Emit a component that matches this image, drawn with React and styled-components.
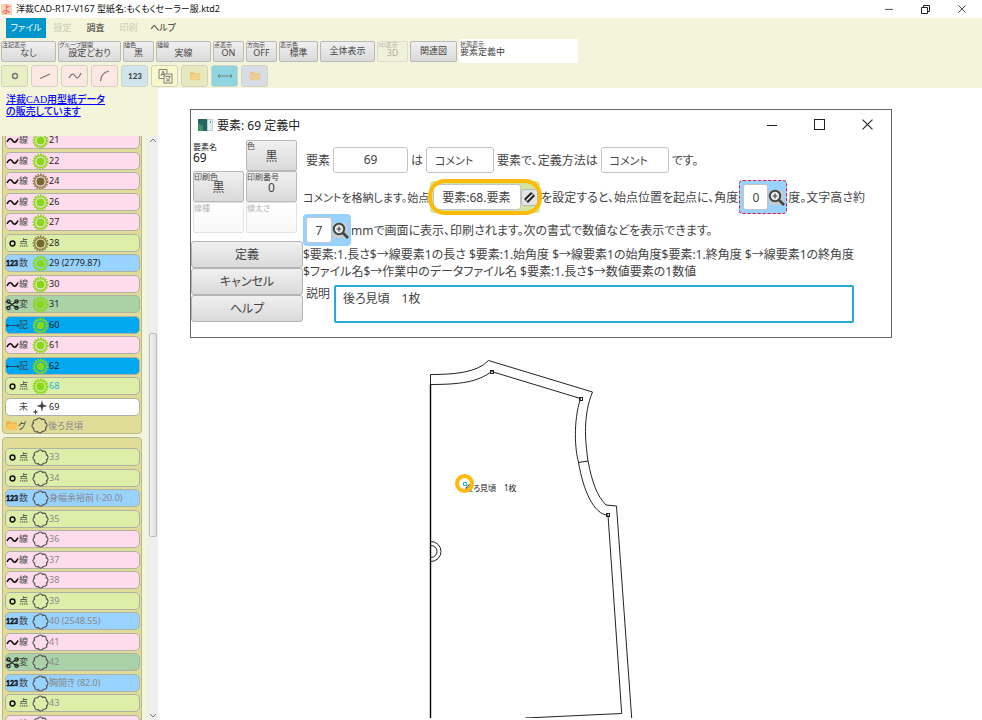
import React from 'react';
import styled, { createGlobalStyle } from 'styled-components';

const GlobalStyle = createGlobalStyle`
  * {
    box-sizing: border-box;
  }
  body {
    margin: 0;
    overflow: hidden;
    background: #fff;
    color: #222;
    font-family: "Noto Sans", "Noto Sans CJK JP", sans-serif;
    font-feature-settings: "palt";
  }
  button, input, textarea {
    font: inherit;
    font-feature-settings: inherit;
    color: inherit;
    margin: 0;
  }
  svg {
    display: block;
    flex: none;
  }
`;

const Page = styled.div`
  height: 100vh;
  display: flex;
  flex-direction: column;
`;

const TitleBar = styled.header`
  height: 18px;
  flex: none;
  display: flex;
  align-items: center;
  gap: 4px;
  padding-left: 1px;
  font-size: 9px;
  line-height: 18px;
  color: #111;
`;

const Logo = styled.span`
  width: 11px;
  height: 11px;
  line-height: 10px;
  font-size: 10px;
  text-align: center;
  background: #f6d3b3;
  color: #f0506a;
`;

const WindowButtons = styled.div`
  display: flex;
  margin-left: auto;
  padding-right: ${(p) => p.$end}px;
  gap: ${(p) => p.$gap}px;
`;

const WindowButton = styled.button`
  border: 0;
  padding: 0;
  background: none;
`;

const Chrome = styled.div`
  flex: none;
  background: #f3f4d9;
`;

const MenuBar = styled.nav`
  display: flex;
  height: 20px;
  padding-left: 6px;
`;

const MenuItem = styled.button`
  width: ${(p) => p.$width || 33}px;
  border: 0;
  padding: 0;
  font-size: 9px;
  line-height: 20px;
  text-align: center;
  background: ${(p) => (p.$active ? '#0096c9' : 'none')};
  color: ${(p) => (p.$active ? '#fff' : '#333')};
  &:disabled {
    color: #ccccb8;
  }
`;

const ToolBar = styled.div`
  display: flex;
  align-items: center;
  gap: 2px;
  height: 26px;
  padding-left: 1px;
`;

const Option = styled.button`
  display: flex;
  flex-direction: column;
  justify-content: ${(p) => (p.$plain ? 'center' : 'flex-start')};
  width: ${(p) => p.$width}px;
  height: ${(p) => p.$height || 21}px;
  padding: 0;
  border: 1px solid #b9b9b9;
  border-radius: 2px;
  background: linear-gradient(#f0f0f0, #dadada);
  color: #444;
  &:disabled {
    opacity: 0.4;
    background: ${(p) => (p.$height ? 'linear-gradient(#fff, #eee)' : '#eeeedd')};
  }
`;

const OptionName = styled.span`
  align-self: flex-start;
  font-size: ${(p) => p.$size || 6}px;
  line-height: ${(p) => (p.$size ? 9 : 6)}px;
  white-space: nowrap;
`;

const OptionValue = styled.span`
  align-self: center;
  font-size: ${(p) => p.$size || 9}px;
  line-height: ${(p) => (p.$size ? 13 : 10)}px;
  white-space: nowrap;
`;

const Status = styled.div`
  width: 119px;
  height: 24px;
  padding: 2px 0 0 1px;
  display: flex;
  flex-direction: column;
  background: #fff;
  color: #444;
  ${OptionValue} {
    align-self: flex-start;
  }
`;

const IconBar = styled(ToolBar)`
  height: 24px;
  gap: 3px;
`;

const IconButton = styled.button`
  display: flex;
  align-items: center;
  justify-content: center;
  width: 27px;
  height: 22px;
  padding: 0;
  border: 1px solid #d2d2c2;
  border-radius: 3px;
  background: ${(p) => p.$color};
  svg {
    opacity: ${(p) => (p.$pale ? 0.6 : 1)};
  }
`;

const Body = styled.div`
  flex: 1;
  min-height: 0;
  display: flex;
`;

const Sidebar = styled.aside`
  width: 158px;
  flex: none;
  display: flex;
  flex-direction: column;
  background: #f3f4d9;
`;

const Shop = styled.a`
  height: 48px;
  flex: none;
  padding: 6px 6px 0;
  color: #00f;
  font-family: "Liberation Serif", "Noto Sans CJK JP", serif;
  font-size: 10px;
  font-weight: 500;
  line-height: 12px;
`;

const ListArea = styled.div`
  flex: 1;
  min-height: 0;
  display: flex;
  justify-content: space-between;
  overflow: hidden;
`;

const Groups = styled.div`
  flex: none;
  width: 140px;
  margin: -9px 0 0 2px;
`;

const Group = styled.section`
  margin-bottom: 3px;
  padding: ${(p) => p.$top}px 1px 0 2px;
  border: 1px solid #b9b98c;
  border-radius: 4px;
  background: #dfdc98;
`;

const Items = styled.ul`
  list-style: none;
  margin: 0;
  padding: 0;
  display: grid;
  grid-auto-rows: 21px 20px;
  align-items: start;
`;

const Item = styled.li`
  display: flex;
  align-items: center;
  height: 18px;
  border: 1px solid #b0b0a8;
  border-radius: 5px;
  background: ${(p) => p.$color};
  font-size: 9px;
  line-height: 16px;
  color: ${(p) => p.$text};
  white-space: nowrap;
`;

const GroupName = styled.div`
  display: flex;
  align-items: center;
  height: 15px;
  font-size: 9px;
  line-height: 15px;
  color: #888;
`;

const Kind = styled.span`
  width: 13px;
  color: #444;
`;

const ScrollBar = styled.div`
  width: 11px;
  display: flex;
  flex-direction: column;
  align-items: center;
  justify-content: space-between;
  background: #eeeeea;
`;

const Thumb = styled.div`
  width: 8px;
  height: 204px;
  margin-top: 189px;
  margin-bottom: auto;
  border: 1px solid #bcbcbc;
  border-radius: 2px;
  background: linear-gradient(90deg, #f4f4f4, #dcdcdc);
`;

const Canvas = styled.main`
  flex: 1;
  min-width: 0;
  overflow: hidden;
  padding: 21px 90px 0 32px;
`;

const Dialog = styled.section`
  height: 229px;
  border: 1px solid #666;
  background: #fff;
`;

const DialogTitle = styled.div`
  display: flex;
  align-items: center;
  gap: 4px;
  height: 29px;
  padding-left: 7px;
  font-size: 12px;
  color: #222;
`;

const DialogBody = styled.div`
  display: flex;
`;

const Left = styled.div`
  width: 112px;
  flex: none;
  display: flex;
  flex-direction: column;
  gap: 8px;
`;

const Attributes = styled.div`
  display: grid;
  grid-template-columns: 51px 51px;
  gap: 0 2px;
  padding: 1px 0 0 2px;
`;

const ElementName = styled.div`
  display: flex;
  flex-direction: column;
  padding-top: 2px;
  ${OptionValue} {
    align-self: flex-start;
  }
`;

const Command = styled.button`
  display: block;
  width: 100%;
  height: 27px;
  padding: 0;
  border: 1px solid #b4b4b4;
  border-radius: 3px;
  background: linear-gradient(#f0f0f0, #dadada);
  font-size: 12px;
  line-height: 25px;
  color: #444;
`;

const Right = styled.div`
  flex: 1;
  min-width: 0;
  font-size: 12px;
  color: #444;
`;

const Sentence = styled.div`
  display: flex;
  align-items: center;
  gap: ${(p) => p.$gap || 0}px;
  height: ${(p) => p.$height}px;
  padding-left: ${(p) => p.$indent || 0}px;
  white-space: nowrap;
`;

const Compact = styled.span`
  font-size: 11px;
`;

const Field = styled.input`
  width: ${(p) => p.$width}px;
  height: 26px;
  padding: 0 ${(p) => (p.$center ? 0 : 8)}px;
  border: 1px solid #c4c4c4;
  border-radius: 3px;
  font-size: ${(p) => (p.$compact ? 11 : 12)}px;
  text-align: ${(p) => (p.$center ? 'center' : 'left')};
  background: #fff;
  outline: none;
`;

const Chip = styled.span`
  position: relative;
  display: flex;
  align-items: center;
  height: ${(p) => (p.$picked ? 34 : 32)}px;
  padding: 0 ${(p) => (p.$picked ? 1 : 2)}px 0 3px;
  border: ${(p) => (p.$picked ? '1px dashed #f01030' : '0')};
  border-radius: 4px;
  background: ${(p) => p.$color};
`;

const Ring = styled.span`
  position: absolute;
  inset: -2px;
  border: 4px solid #ffba08;
  border-radius: 17px;
  pointer-events: none;
`;

const PickButton = styled.button`
  display: flex;
  align-items: center;
  justify-content: center;
  width: 17px;
  height: 17px;
  padding: 0;
  border: 1px solid #bbb;
  border-radius: 3px;
  background: #e4e4e4;
`;

const Formats = styled.p`
  margin: 0;
  line-height: 17px;
  white-space: nowrap;
`;

const Description = styled.div`
  display: flex;
  gap: 4px;
  padding: 5px 37px 0 3px;
  line-height: 17px;
`;

const Memo = styled.textarea`
  flex: 1;
  height: 38px;
  padding: 3px 7px;
  border: 2px solid #25a9d8;
  border-radius: 2px;
  resize: none;
  outline: none;
  line-height: 17px;
`;

const Drawing = styled.svg`
  margin: 18px 0 0 238px;
`;

const MinimizeIcon = ({ size }) => (
  <svg width={size} height={size} viewBox="0 0 10 10" stroke="#222">
    <path d="M0 5.5h10" />
  </svg>
);

const CloseIcon = ({ size }) => (
  <svg width={size} height={size} viewBox="0 0 10 10" stroke="#222">
    <path d="M0.5 0.5l9 9M9.5 0.5l-9 9" />
  </svg>
);

const Folder = ({ size = 13 }) => (
  <svg width={size} height={size} viewBox="0 0 13 13">
    <path d="M1 2h4l1 1.5h6v7H1z" fill="#efb64a" />
    <path d="M1 11l2-6h9.5l-1 6z" fill="#fbc55f" />
  </svg>
);

const GLYPHS = {
  線: <path d="M1 8C3 4 5 4 6.5 6.5S10 9 12 4.5" fill="none" stroke="#111" strokeWidth="1.6" />,
  点: <circle cx="6.5" cy="6.5" r="2.4" fill="none" stroke="#111" strokeWidth="1.5" />,
  数: <text x="0" y="9" fontSize="7" fontWeight="900" fontFamily="Lato, sans-serif" fill="#111" stroke="#111" strokeWidth="0.4">123</text>,
  変: (
    <g fill="none" stroke="#222" strokeWidth="1.2">
      <path d="M0 4C4 3 8 10 13 10M0 9.500C4 10 8 3 13 3" />
      <circle cx="2.500" cy="3.500" r="1.600" />
      <circle cx="2.500" cy="10" r="1.600" />
      <circle cx="10.500" cy="3.500" r="1.600" />
      <circle cx="10.500" cy="9.700" r="1.600" />
    </g>
  ),
  記: <path d="M0 6.5h13M2 5L0 6.5L2 8M11 5l2 1.5L11 8" fill="none" stroke="#234" strokeWidth="0.8" />,
};

const KindIcon = ({ kind }) => (
  <svg width="13" height="13" viewBox="0 0 13 13">{GLYPHS[kind]}</svg>
);

// filled sun = visible, brown sun = reference only, outline = hidden
const StateIcon = ({ state }) => {
  if (state === 'new') {
    return (
      <svg width="17" height="16" viewBox="0 0 17 16" fill="#444">
        <path d="M10 1l1 4.5L15.5 7L11 8.2L10 13L8.8 8.2L4.5 7L8.8 5.5z" />
        <path d="M3.5 10l.8 2.2l2.2.8l-2.2.8l-.8 2.2l-.8-2.2L.5 13l2.2-.8z" />
      </svg>
    );
  }
  if (state === 'off') {
    const arcs = [0, 45, 90, 135, 180, 225, 270, 315];
    return (
      <svg width="17" height="17" viewBox="0 0 17 17" fill="none" stroke="#555" strokeWidth="1.1">
        {arcs.map((a) => (
          <path key={a} d="M5.600 3.200Q6.200 0.600 8.600 1L11 2.200" transform={`rotate(${a} 8.5 8.5)`} />
        ))}
      </svg>
    );
  }
  const color = state === 'ref' ? '#8c7c45' : '#86d914';
  return (
    <svg width="17" height="17" viewBox="0 0 17 17">
      <circle cx="8.5" cy="8.5" r="7.2" fill="none" stroke={color} strokeWidth="1.6" strokeDasharray="1.6 1.17" />
      <circle cx="8.5" cy="8.5" r="5.9" fill="none" stroke={color} strokeWidth="1.3" />
      <circle cx="8.5" cy="8.5" r="4" fill={state === 'ref' ? '#73692f' : color} />
    </svg>
  );
};

const Magnifier = () => (
  <svg width="17" height="19" viewBox="0 0 17 19">
    <rect x="1" y="2" width="14" height="15" rx="2" fill="#ccc" />
    <circle cx="7" cy="8" r="5.2" fill="#eee" stroke="#444" strokeWidth="2" />
    <path d="M11 12l5 5" stroke="#444" strokeWidth="2.6" />
    <path d="M4.5 8h5M7 5.5v5" stroke="#444" strokeWidth="1.2" />
  </svg>
);

const COLORS = {
  線: '#ffdcec',
  点: '#dceea8',
  数: '#98d2ff',
  変: '#a9d2a8',
  記: '#00a8f0',
  未: '#ffffff',
};

const front = [
  ['線', '21'],
  ['線', '22'],
  ['線', '24', 'ref'],
  ['線', '26'],
  ['線', '27'],
  ['点', '28', 'ref'],
  ['数', '29 (2779.87)'],
  ['線', '30'],
  ['変', '31'],
  ['記', '60'],
  ['線', '61'],
  ['記', '62'],
  ['点', '68', 'on', '#1cb4dc'],
  ['未', '69', 'new'],
];

const back = [
  ['点', '33'],
  ['点', '34'],
  ['数', '身幅余裕前 (-20.0)'],
  ['点', '35'],
  ['線', '36'],
  ['線', '37'],
  ['線', '38'],
  ['点', '39'],
  ['数', '40 (2548.55)'],
  ['線', '41'],
  ['変', '42'],
  ['数', '胸開き (82.0)'],
  ['点', '43'],
  ['線', '44'],
].map(([kind, name]) => [kind, name, 'off']);

const ElementGroup = ({ items, top, name: groupName }) => (
  <Group $top={top}>
    <Items>
      {items.map(([kind, name, state = 'on', text]) => (
        <Item key={name} $color={COLORS[kind]} $text={text || (state === 'off' ? '#888' : '#222')}>
          <KindIcon kind={kind} />
          <Kind>{kind}</Kind>
          <StateIcon state={state} />
          {name}
        </Item>
      ))}
    </Items>
    {groupName && (
      <GroupName>
        <Folder />
        <Kind>グ</Kind>
        <StateIcon state="off" />
        {groupName}
      </GroupName>
    )}
  </Group>
);

const options = [
  { name: '注記表示', value: 'なし', width: 55 },
  { name: 'グループ展開', value: '設定どおり', width: 63 },
  { name: '描色', value: '黒', width: 31 },
  { name: '描線', value: '実線', width: 55 },
  { name: '点表示', value: 'ON', width: 31 },
  { name: '方向示', value: 'OFF', width: 31 },
  { name: '表示色', value: '標準', width: 39 },
  { value: '全体表示', width: 55 },
  { name: '3D表示', value: '3D', width: 31, disabled: true },
  { value: '関連図', width: 47 },
];

const tools = [
  { name: '点', color: '#e8efc4', icon: <circle cx="9" cy="8" r="2.5" strokeWidth="1.4" /> },
  { name: '直線', color: '#fbe8e2', icon: <path d="M4 10.5L14 6" strokeWidth="1.2" /> },
  { name: '曲線', color: '#fbe8e2', icon: <path d="M3 10C6 4 8 6 9.5 8.5S13 10 15 5" strokeWidth="1.2" /> },
  { name: '円弧', color: '#fbe8e2', icon: <path d="M4.5 13C5 8 8 4 13 3" strokeWidth="1.2" /> },
  {
    name: '数値',
    color: '#cfe5ec',
    icon: (
      <text x="2" y="11" fontSize="8" fontWeight="900" fontFamily="Lato, sans-serif" fill="#444" stroke="none">
        123
      </text>
    ),
  },
  {
    name: '変換',
    color: '#f8f8cc',
    icon: (
      <g strokeWidth="0.9">
        <path d="M8 10.500H3V1.500h8v4" />
        <path d="M5 8l2-5l2 5M5.800 6.500h2.400" />
        <rect x="8" y="6" width="8" height="9" />
        <path d="M9.500 8.500h5M12 7.500v1M10 13.500Q13.500 12 14 8.500M10 9.500Q11 12 14 13.500" />
      </g>
    ),
  },
  { name: 'グループ', color: '#e8e8bf', folder: true },
  { name: '寸法', color: '#8dd5e0', icon: <path d="M2 8h14M4 6L2 8l2 2M14 6l2 2l-2 2" strokeWidth="0.9" /> },
  { name: 'フォルダ', color: '#d7dce6', folder: true },
];

const Settings = () => (
  <Attributes>
    <ElementName>
      <OptionName $size={8}>要素名</OptionName>
      <OptionValue $size={12}>69</OptionValue>
    </ElementName>
    {[
      ['色', '黒'],
      ['印刷色', '黒'],
      ['印刷番号', '0'],
      ['線種', ''],
      ['線太さ', ''],
    ].map(([name, value]) => (
      <Option key={name} $width={51} $height={31} disabled={!value}>
        <OptionName $size={8}>{name}</OptionName>
        <OptionValue $size={12}>{value}</OptionValue>
      </Option>
    ))}
  </Attributes>
);

const ElementDialog = () => (
  <Dialog role="dialog" aria-label="要素: 69 定義中">
    <DialogTitle>
      <svg width="15" height="12" viewBox="0 0 15 12">
        <rect width="15" height="12" fill="#bcd" />
        <rect width="9" height="12" fill="#24665e" />
        <path d="M0 12V4l5 3v5z" fill="#3e8f6c" />
        <rect x="10" y="1" width="4" height="10" fill="#e8eef2" />
        <path d="M12.500 2v2" stroke="#2a8" />
      </svg>
      要素: 69 定義中
      <WindowButtons $end={18} $gap={37}>
        <WindowButton aria-label="最小化"><MinimizeIcon size={10} /></WindowButton>
        <WindowButton aria-label="最大化">
          <svg width="11" height="11" viewBox="0 0 11 11" fill="none" stroke="#222">
            <rect x="0.500" y="0.500" width="10" height="10" />
          </svg>
        </WindowButton>
        <WindowButton aria-label="閉じる"><CloseIcon size={11} /></WindowButton>
      </WindowButtons>
    </DialogTitle>
    <DialogBody>
      <Left>
        <Settings />
        <div>
          <Command>定義</Command>
          <Command>キャンセル</Command>
          <Command>ヘルプ</Command>
        </div>
      </Left>
      <Right>
        <Sentence $height={41} $gap={3} $indent={3}>
          <label htmlFor="element">要素</label>
          <Field id="element" $width={75} $center defaultValue="69" />
          <label htmlFor="type">は</label>
          <Field id="type" $width={68} $compact defaultValue="コメント" />
          <label htmlFor="method">要素で、定義方法は</label>
          <Field id="method" $width={68} $compact defaultValue="コメント" />
          です。
        </Sentence>
        <Sentence $height={34} $gap={1}>
          <Compact>コメントを格納します。始点</Compact>
          <Chip $color="#d3e79c">
            <Field $width={88} defaultValue="要素:68.要素" aria-label="始点" />
            <PickButton aria-label="始点を消去">
              <svg width="13" height="13" viewBox="0 0 13 13">
                <path d="M1 8L8 1L12 5L5 12z" fill="#222" />
                <path d="M3.500 9.500L9.500 3.500" stroke="#fff" strokeWidth="1.500" />
              </svg>
            </PickButton>
            <Ring />
          </Chip>
          を設定すると、始点位置を起点に、角度
          <Chip $color="#98d2ff" $picked>
            <Field $width={25} $center defaultValue="0" aria-label="角度" />
            <WindowButton aria-label="角度を選択"><Magnifier /></WindowButton>
          </Chip>
          度。文字高さ約
        </Sentence>
        <Sentence $height={32}>
          <Chip $color="#98d2ff">
            <Field $width={26} $center defaultValue="7" aria-label="文字高さ" />
            <WindowButton aria-label="文字高さを選択"><Magnifier /></WindowButton>
          </Chip>
          mmで画面に表示、印刷されます。次の書式で数値などを表示できます。
        </Sentence>
        <Formats>
          $要素:1.長さ$→線要素1の長さ $要素:1.始角度 $→線要素1の始角度$要素:1.終角度 $→線要素1の終角度
          <br />
          $ファイル名$→作業中のデータファイル名 $要素:1.長さ$→数値要素の1数値
        </Formats>
        <Description>
          <label htmlFor="memo">説明</label>
          <Memo id="memo" defaultValue="後ろ見頃　1枚" autoFocus onFocus={(e) => e.target.setSelectionRange(99, 99)} />
        </Description>
      </Right>
    </DialogBody>
  </Dialog>
);

const Pattern = () => (
  <Drawing width="210" height="362" viewBox="428 356 210 362" fill="none" stroke="#222">
    <path d="M430.500 384V374.500C453 374.500 477 373 488.500 360.500L592.500 392C583 415 585 440 588 461C592 482 597 496 606 505L616.500 506L631.700 718" />
    <path d="M430.500 384.500C460 384.500 478 382 491.500 371.500L580.500 398.500C573 422 575 450 578.500 462C583 490 594 515 608 515L621.700 713.500L525 718" />
    <path d="M578.500 462.500L588 461" />
    <path d="M430.500 384V718" stroke="#000" strokeWidth="1.400" />
    <path d="M431 545.500a6 6 0 0 1 0 12M431 541.500a10 10 0 0 1 0 20" />
    <path d="M490 370h3v3h-3zM579 397h3v3h-3zM606.500 513.500h3v3h-3z" shapeRendering="crispEdges" />
    <text x="465" y="491" fontSize="8" fill="#222" stroke="none" xmlSpace="preserve">後ろ見頃　1枚</text>
    <circle cx="464.500" cy="483.500" r="7.500" stroke="#ffba08" strokeWidth="4" />
    <path d="M463.500 482.500h3v3h-3z" stroke="#1cb4dc" />
  </Drawing>
);

const App = () => {
  return (
    <Page>
      <GlobalStyle />
      <TitleBar>
        <Logo>よ</Logo>
        洋裁CAD-R17-V167 型紙名:もくもくセーラー服.ktd2
        <WindowButtons $end={16} $gap={28}>
          <WindowButton aria-label="最小化"><MinimizeIcon size={8} /></WindowButton>
          <WindowButton aria-label="元に戻す">
            <svg width="9" height="9" viewBox="0 0 9 9" fill="none" stroke="#222">
              <path d="M0.500 2.500h6v6h-6zM2.500 2.500v-2h6v6h-2" />
            </svg>
          </WindowButton>
          <WindowButton aria-label="閉じる"><CloseIcon size={8} /></WindowButton>
        </WindowButtons>
      </TitleBar>
      <Chrome>
        <MenuBar>
          <MenuItem $active $width={40}>ファイル</MenuItem>
          <MenuItem disabled>設定</MenuItem>
          <MenuItem>調査</MenuItem>
          <MenuItem disabled>印刷</MenuItem>
          <MenuItem $width={36}>ヘルプ</MenuItem>
        </MenuBar>
        <ToolBar>
          {options.map((o) => (
            <Option key={o.value} $width={o.width} $plain={!o.name} disabled={o.disabled}>
              {o.name && <OptionName>{o.name}</OptionName>}
              <OptionValue>{o.value}</OptionValue>
            </Option>
          ))}
          <Status>
            <OptionName>状態表示</OptionName>
            <OptionValue>要素定義中</OptionValue>
          </Status>
        </ToolBar>
        <IconBar>
          {tools.map((t) => (
            <IconButton key={t.name} $color={t.color} $pale={t.folder} aria-label={t.name}>
              {t.folder ? (
                <Folder size={12} />
              ) : (
                <svg width="18" height="16" viewBox="0 0 18 16" fill="none" stroke="#777">
                  {t.icon}
                </svg>
              )}
            </IconButton>
          ))}
        </IconBar>
      </Chrome>
      <Body>
        <Sidebar>
          <Shop href="#">
            洋裁CAD用型紙データ
            <br />
            の販売しています
          </Shop>
          <ListArea>
            <Groups>
              <ElementGroup items={front} top={3} name="後ろ見頃" />
              <ElementGroup items={back} top={10} />
            </Groups>
            <ScrollBar>
              <svg width="8" height="8" viewBox="0 0 8 8" fill="none" stroke="#777">
                <path d="M1 6l3-3l3 3" />
              </svg>
              <Thumb />
              <svg width="8" height="8" viewBox="0 0 8 8" fill="none" stroke="#777">
                <path d="M1 2l3 3l3-3" />
              </svg>
            </ScrollBar>
          </ListArea>
        </Sidebar>
        <Canvas>
          <ElementDialog />
          <Pattern />
        </Canvas>
      </Body>
    </Page>
  );
};

export default App;
